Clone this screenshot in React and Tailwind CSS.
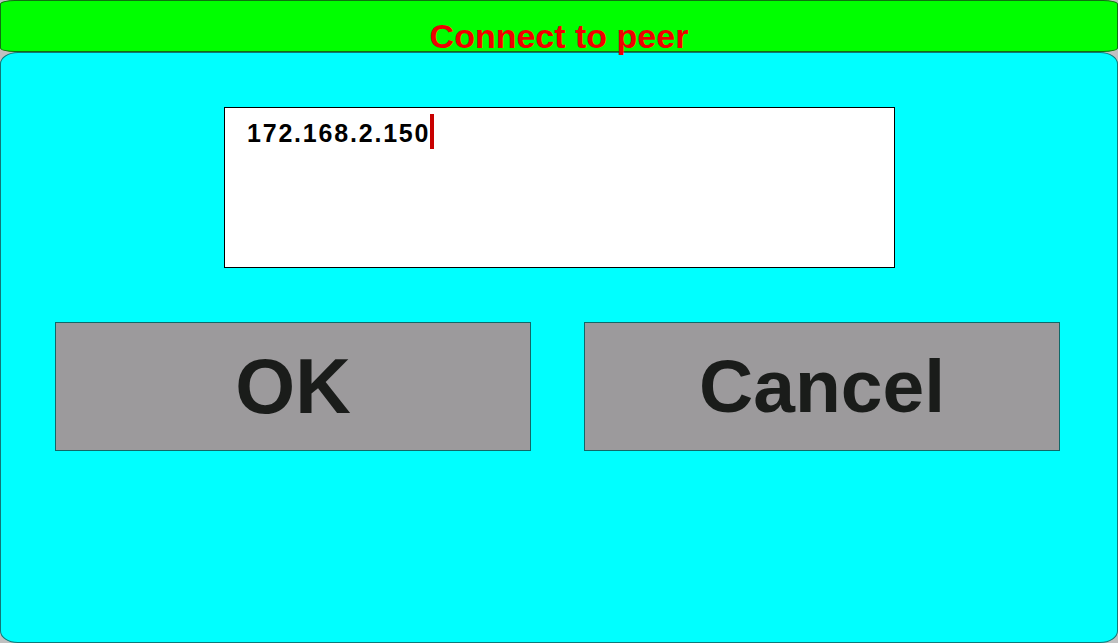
export default function App() {
  return (
    <div
      className="w-[1118px] h-[643px] bg-[#c0c0c0] flex flex-col overflow-hidden"
      style={{ fontFamily: '"Liberation Sans", Arial, sans-serif' }}
    >
      {/* Title bar */}
      <div className="relative z-10 h-[52px] shrink-0 bg-[#00ff00] border border-[#107010] rounded-[15px/4px] flex justify-center">
        <span className="pt-[18px] text-[34px] leading-[34px] font-bold text-[#f00000] whitespace-nowrap">
          Connect to peer
        </span>
      </div>

      {/* Dialog body */}
      <div className="flex-1 bg-[#00ffff] border border-[#107878] rounded-[18px/12px] flex flex-col">
        {/* Input */}
        <div className="mt-[54px] ml-[223px] w-[671px] h-[161px] bg-white border border-black flex items-start pl-[22px]">
          <span className="pt-[13px] text-[25px] leading-[25px] font-bold text-black tracking-[1.8px]">
            172.168.2.150
          </span>
          <span className="mt-[6px] w-[4px] h-[35px] bg-[#c80000]"></span>
        </div>

        {/* Buttons */}
        <div className="mt-[54px] ml-[54px] flex gap-[53px]">
          <button className="w-[476px] h-[129px] bg-[#9c9a9c] border border-[#106868] flex items-center justify-center text-[77px] leading-none font-bold text-[#1a1c1a]">
            OK
          </button>
          <button className="w-[476px] h-[129px] bg-[#9c9a9c] border border-[#106868] flex items-center justify-center text-[75px] leading-none font-bold text-[#1a1c1a]">
            Cancel
          </button>
        </div>
      </div>
    </div>
  );
}
